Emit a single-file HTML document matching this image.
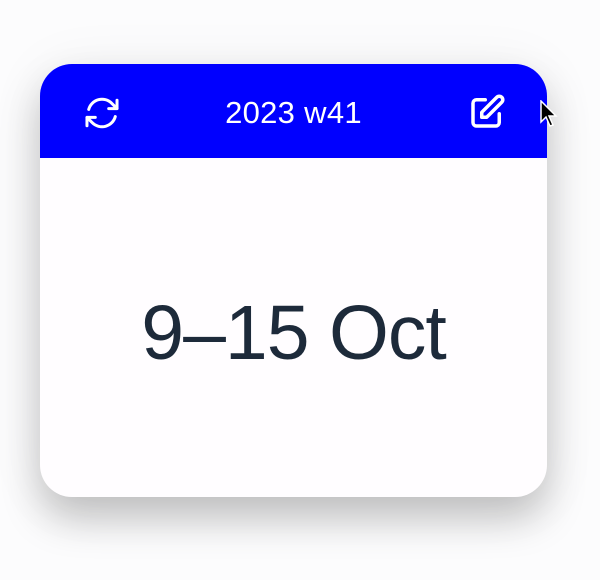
<!DOCTYPE html>
<html><head><style>
html,body{margin:0;padding:0;width:600px;height:580px;background:#fcfcfd;overflow:hidden;font-family:"Liberation Sans",sans-serif}
.card{position:absolute;left:40px;top:64px;width:507px;height:433px;border-radius:32px;background:#fffdff;overflow:hidden;box-shadow:0 22px 40px rgba(0,0,0,0.22),0 4px 60px rgba(0,0,0,0.06)}
.hdr{position:absolute;left:0;top:0;width:507px;height:94px;background:#0000ff}
.title{position:absolute;left:0;width:507px;top:31px;text-align:center;color:#fff;font-size:31px;letter-spacing:0.3px}
.big{position:absolute;left:0;width:507px;top:269px;text-align:center;color:#1d2a3a;font-size:77px;line-height:90px;letter-spacing:-1px;transform:translateY(-50%)}
svg{position:absolute}
</style></head><body>
<div class="card">
<div class="hdr">
<svg style="left:42px;top:29px" width="40" height="40" viewBox="0 0 24 24" fill="none" stroke="#fff" stroke-width="1.8" stroke-linecap="round" stroke-linejoin="round"><path d="M16.023 9.348h4.992v-.001M2.985 19.644v-4.992m0 0h4.992m-4.993 0l3.181 3.183a8.25 8.25 0 0013.803-3.7M4.031 9.865a8.25 8.25 0 0113.803-3.7l3.181 3.182m0-4.991v4.99"/></svg>
<div class="title">2023 w41</div>
<svg style="left:426px;top:27px" width="42" height="42" viewBox="0 0 24 24" fill="none" stroke="#fff" stroke-width="2" stroke-linecap="round" stroke-linejoin="round"><path d="M11 5H6a2 2 0 00-2 2v11a2 2 0 002 2h11a2 2 0 002-2v-5m-1.414-9.414a2 2 0 112.828 2.828L11.828 15H9v-2.828l8.586-8.586z"/></svg>
</div>
<div class="big">9–15 Oct</div>
</div>
<svg style="left:540px;top:100px" width="20" height="30" viewBox="0 0 20 30"><path d="M1 1 L1 22 L6 17 L10 26 L13 25 L9 16 L16 16 Z" fill="#000" stroke="#fff" stroke-width="1.5"/></svg>
</body></html>
